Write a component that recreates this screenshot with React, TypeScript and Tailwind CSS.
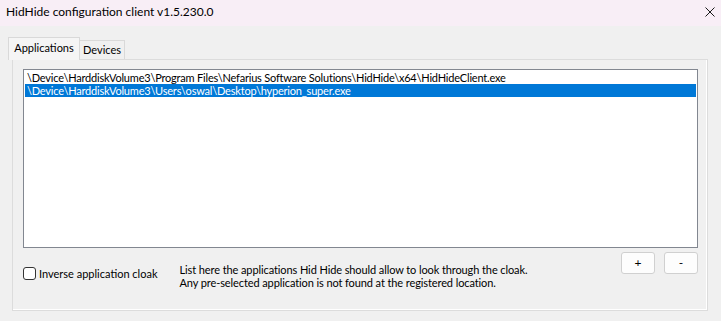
const font = { fontFamily: 'Lato, "Noto Sans", sans-serif' };

const rows = [
  "\\Device\\HarddiskVolume3\\Program Files\\Nefarius Software Solutions\\HidHide\\x64\\HidHideClient.exe",
  "\\Device\\HarddiskVolume3\\Users\\oswal\\Desktop\\hyperion_super.exe",
];

function WinButton({ label }: { label: string }) {
  return (
    <button className="flex h-[22px] w-[34px] items-center justify-center rounded-[3px] border border-[#d0d0d0] bg-[#fdfdfd] text-[12px] leading-none text-black">
      {label}
    </button>
  );
}

export default function App() {
  return (
    <div
      className="flex h-[321px] w-[721px] flex-col overflow-hidden bg-[#f0f0f0] text-black"
      style={font}
    >
      {/* Title bar */}
      <div className="flex h-[26px] shrink-0 items-center justify-between bg-[#f8eef6] pb-[3px] pl-[6px] pr-[6px]">
        <span className="text-[12px] leading-none">HidHide configuration client v1.5.230.0</span>
        <svg width="10" height="10" viewBox="0 0 10 10">
          <path d="M0.5 0.5 L9.5 9.5 M9.5 0.5 L0.5 9.5" stroke="#1a1a1a" strokeWidth="1" />
        </svg>
      </div>

      {/* Tabs */}
      <div className="ml-[8px] mt-[11px] flex items-end">
        <div className="relative z-10 -mb-px flex h-[23px] w-[72px] items-center justify-center border border-b-0 border-[#d9d9d9] bg-[#f5f5f5] pb-[2px] text-[11px]">
          Applications
        </div>
        <div className="flex h-[19px] w-[45px] items-center justify-center border border-b-0 border-l-0 border-[#d9d9d9] bg-[#f0f0f0] text-[11px]">
          Devices
        </div>
      </div>

      {/* Tab page */}
      <div className="ml-[12px] flex h-[252px] w-[696px] flex-col border border-[#dcdcdc] bg-[#f0f0f0] shadow-[inset_-1px_-1px_0_#ffffff]">
        <div className="ml-[10px] mt-[9px] h-[179px] w-[675px] border border-[#828790] bg-white p-px">
          {rows.map((r, i) => (
            <div
              key={r}
              className={
                i === 1
                  ? "h-[13px] overflow-hidden whitespace-nowrap bg-[#0078d7] pl-[2px] text-[11px] leading-[13px] tracking-[-0.2px] text-white"
                  : "h-[13px] overflow-hidden whitespace-nowrap pl-[2px] text-[11px] leading-[13px] tracking-[-0.2px]"
              }
            >
              {r}
            </div>
          ))}
        </div>

        <div className="mt-[4px] flex">
          <label className="ml-[10px] mt-[6px] flex items-center gap-[3px] text-[11px] leading-none">
            <span className="h-[13px] w-[13px] rounded-[3px] border border-[#333333] bg-white" />
            Inverse application cloak
          </label>
          <div className="ml-[22px] mt-[11px] text-[11px] leading-[13px] tracking-[-0.1px]">
            <div>List here the applications Hid Hide should allow to look through the cloak.</div>
            <div>Any pre-selected application is not found at the registered location.</div>
          </div>
          <div className="ml-auto mr-[9px] flex gap-[9px]">
            <WinButton label="+" />
            <WinButton label="-" />
          </div>
        </div>
      </div>
    </div>
  );
}
